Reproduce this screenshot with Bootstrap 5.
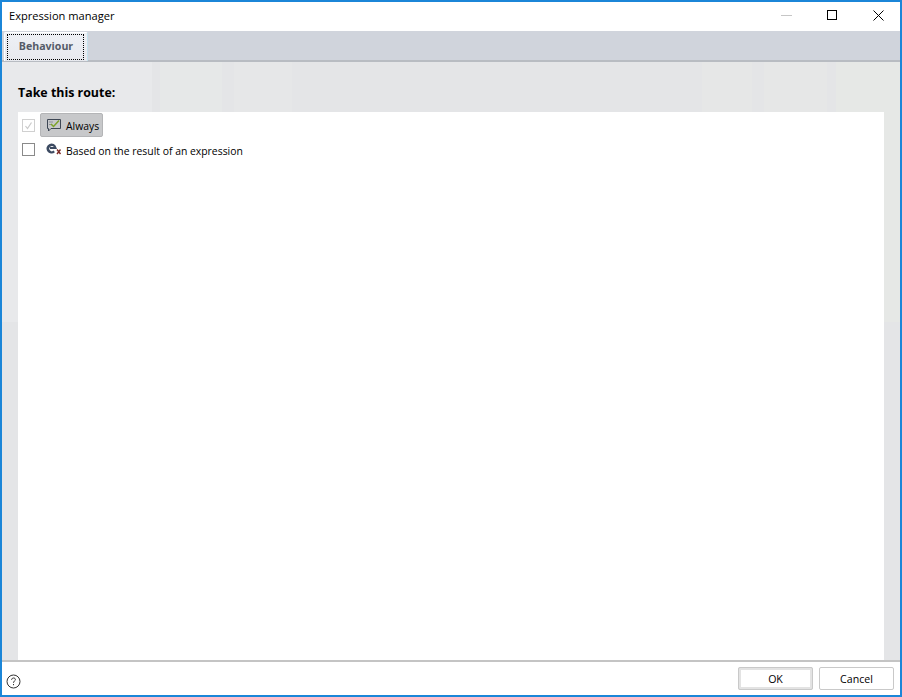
<!DOCTYPE html>
<html lang="en">
<head>
<meta charset="utf-8">
<title>Expression manager</title>
<link href="https://cdn.jsdelivr.net/npm/bootstrap@5.3.0/dist/css/bootstrap.min.css" rel="stylesheet">
<style>
html,body{height:100%;}
body{background:#fff;font-family:"Open Sans","Noto Sans","Liberation Sans",sans-serif;color:#000;overflow:hidden;}
.win{width:902px;height:697px;border:2px solid #1b86d8;background:#fff;}
.titlebar{height:29px;padding:0 0 2px 7px;font-size:11.1px;}
.titletext{padding-top:2px;}
.winbtn{width:46px;height:29px;}
.shift{margin-right:-1px;}
.tabstrip{height:31px;background:#d0d4dc;border-bottom:2px solid #b8bcc2;padding-left:2px;}
.tabx{width:84px;height:29px;margin-top:1px;background:linear-gradient(#eef0f5,#e7e9ee);border:1px solid #fff;border-right-color:#c4e2ee;border-bottom:0;border-radius:2px 2px 0 0;padding:1px 3px 0 2px;}
.tabfocus{border:1px dotted #000;height:26px;padding-left:1px;font-size:10.6px;font-weight:700;color:#555b68;}
.mainarea{background-color:#e4e5e7;background-image:linear-gradient(90deg,#e8e9eb 0,#e8e9eb 150px,#e4e5e7 150px,#e4e5e7 158px,#e6e8e8 158px,#e6e8e8 220px,#e4e5e7 220px,#e4e5e7 232px,#e6e7e8 232px,#e6e7e8 290px,#e4e5e7 290px,#e4e5e7 700px,#e6e7e7 700px,#e6e7e7 750px,#e4e5e7 750px,#e4e5e7 762px,#e6e7e7 762px,#e6e7e7 825px,#e4e5e7 825px,#e4e5e7 834px,#e6e8e6 834px);background-size:100% 260px;background-repeat:no-repeat;padding:0 16px;}
.headline{height:50px;padding-top:22px;font-size:12.4px;font-weight:700;line-height:18px;}
.sheet{background:#fff;padding:1px 0 0 4px;}
.optrow{height:24px;font-size:10.4px;}
.optrow.two{height:25px;}
.boxx{width:13px;height:13px;border:1px solid #8a8a8a;background:#fff;}
.boxx.off{border-color:#d0d0d0;}
.picked{width:63px;height:24px;margin-left:5px;background:#c7c8ca;border:1px solid #b4b5b7;border-radius:2px;padding-left:5px;}
.plain{margin-left:5px;padding-left:6px;}
.ico{width:16px;height:16px;flex:none;}
.lbl{margin-left:4px;white-space:nowrap;padding-top:4px;}
.footbar{height:35px;border-top:2px solid #c4c4c4;padding:5px 6px 0 4px;}
.helpi{margin-top:7px;}
.btnset{column-gap:6px;}
.pushbtn{width:75px;height:23px;background:#fff;border:1px solid #c9c9c9;border-radius:2px;font-size:10.6px;line-height:20px;text-align:center;color:#000;padding:0;}
.pushbtn.dflt{border:3px solid #e3e3e3;outline:1px solid #c9c9c9;outline-offset:-1px;line-height:16px;}
</style>
</head>
<body>
<div class="win d-flex flex-column">
  <div class="titlebar d-flex align-items-center justify-content-between flex-shrink-0">
    <span class="titletext">Expression manager</span>
    <div class="d-flex shift">
      <div class="winbtn d-flex align-items-center justify-content-center"><svg width="11" height="11" viewBox="0 0 11 11"><path d="M0 5.5H11" stroke="#c6c6c6" stroke-width="1"/></svg></div>
      <div class="winbtn d-flex align-items-center justify-content-center"><svg width="11" height="11" viewBox="0 0 11 11"><rect x=".5" y=".5" width="9" height="9" fill="none" stroke="#000"/></svg></div>
      <div class="winbtn d-flex align-items-center justify-content-center"><svg width="11" height="11" viewBox="0 0 11 11"><path d="M.5 .5L10.5 10.5M10.5 .5L.5 10.5" stroke="#000" stroke-width="1"/></svg></div>
    </div>
  </div>
  <div class="tabstrip d-flex flex-shrink-0">
    <div class="tabx"><div class="tabfocus d-flex align-items-center justify-content-center">Behaviour</div></div>
  </div>
  <div class="mainarea flex-grow-1 d-flex flex-column">
    <div class="headline flex-shrink-0">Take this route:</div>
    <div class="sheet flex-grow-1">
      <div class="optrow d-flex align-items-center">
        <div class="boxx off d-flex align-items-center justify-content-center"><svg width="9" height="9" viewBox="0 0 9 9"><path d="M1.5 5L3.5 7.5L7.5 1.5" fill="none" stroke="#c9c9c9" stroke-width="1.2"/></svg></div>
        <div class="picked d-flex align-items-center">
          <svg class="ico" viewBox="0 0 16 16"><path d="M1.5 2.5H14.5V11.5H5L2.5 14V11.5H1.5Z" fill="none" stroke="#3d4654" stroke-width="1"/><path d="M3 5H7M3 7.5H6" stroke="#8d929b"/><path d="M5 7L7.5 9.5L13 3.5" fill="none" stroke="#7da32a" stroke-width="1.5"/></svg>
          <span class="lbl">Always</span>
        </div>
      </div>
      <div class="optrow two d-flex align-items-center">
        <div class="boxx"></div>
        <div class="plain d-flex align-items-center">
          <svg class="ico" viewBox="0 0 16 16"><path d="M10.4 6.5A5 5 0 1 0 8.9 11.2L7.6 9.6A2.6 2.6 0 1 1 7.9 6H4V8H11Z" fill="#3d4b62" fill-rule="evenodd"/><path d="M11 8.5L14.5 13M14.5 8.5L11 13" stroke="#7b2a25" stroke-width="1.4"/></svg>
          <span class="lbl">Based on the result of an expression</span>
        </div>
      </div>
    </div>
  </div>
  <div class="footbar d-flex justify-content-between flex-shrink-0">
    <svg class="helpi" width="15" height="15" viewBox="0 0 15 15"><circle cx="7.5" cy="7.5" r="6.5" fill="none" stroke="#333"/><path d="M5.6 5.8C5.6 3.4 9.4 3.4 9.4 5.6C9.4 7 7.5 7 7.5 8.8" fill="none" stroke="#333"/><path d="M7.5 10V11.2" stroke="#333"/></svg>
    <div class="d-flex btnset">
      <button class="pushbtn dflt" type="button">OK</button>
      <button class="pushbtn" type="button">Cancel</button>
    </div>
  </div>
</div>
</body>
</html>
